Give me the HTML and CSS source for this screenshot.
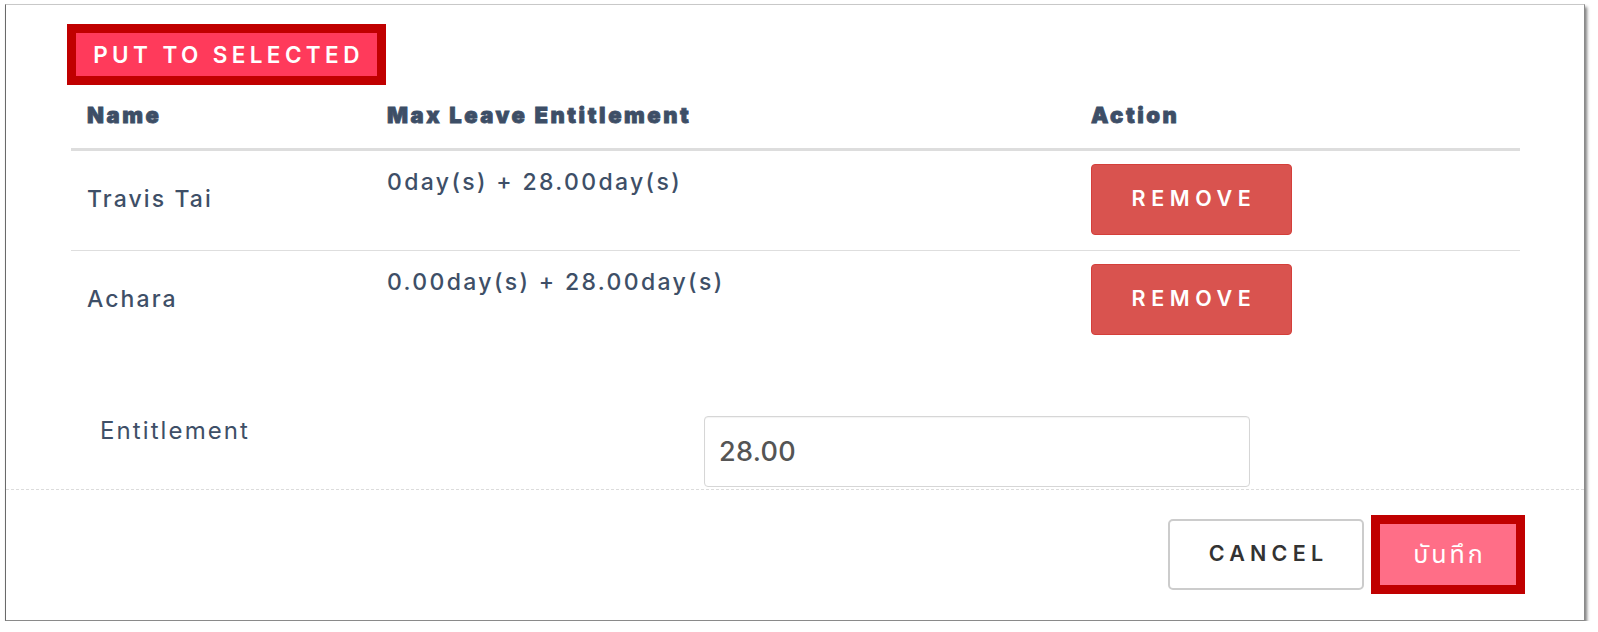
FILE: index.html
```html
<!DOCTYPE html>
<html>
<head>
<meta charset="utf-8">
<link rel="stylesheet" href="styles.css">
</head>
<body>
<div class="frame">
  <div class="modal-body">
    <button class="btn-put">PUT TO SELECTED</button>
    <div class="tbl">
      <div class="tr th">
        <div class="cell">Name</div>
        <div class="cell">Max Leave Entitlement</div>
        <div class="cell">Action</div>
      </div>
      <div class="tr row sep">
        <div class="cell name">Travis Tai</div>
        <div class="cell amt">0day(s) + 28.00day(s)</div>
        <div class="cell act"><button class="btn-remove">REMOVE</button></div>
      </div>
      <div class="tr row">
        <div class="cell name">Achara</div>
        <div class="cell amt">0.00day(s) + 28.00day(s)</div>
        <div class="cell act"><button class="btn-remove">REMOVE</button></div>
      </div>
    </div>
    <div class="form-row">
      <label class="form-label">Entitlement</label>
      <input class="form-input" type="text" value="28.00">
    </div>
  </div>
  <div class="modal-footer">
    <button class="btn-cancel">CANCEL</button>
    <button class="btn-save">บันทึก</button>
  </div>
</div>
</body>
</html>
```
FILE: styles.css
```css
* { box-sizing: border-box; }
html, body { margin: 0; padding: 0; background: #fff; }
body {
  font-family: "Inter", "Liberation Sans", sans-serif;
  color: #3e4f67;
  padding: 4px 0 0 5px;
}
.frame {
  width: 1580px;
  background: #fff;
  border-left: 1px solid #6a6a6a;
  border-top: 1px solid #c8c8c8;
  border-right: 1px solid #8a8a8a;
  border-bottom: 1px solid #8a8a8a;
  box-shadow: 2px 3px 3px rgba(0,0,0,0.5);
}
.modal-body {
  padding: 19px 0 2px 61px;
}
button { font-family: inherit; cursor: pointer; }
.btn-put {
  display: block;
  width: 319px;
  height: 61px;
  border: 9px solid #c00000;
  background: #ff3a5b;
  color: #fff;
  font-size: 22.5px;
  font-weight: 600;
  letter-spacing: 4.4px;
  padding: 0 0 0 4px;
  border-radius: 0;
}
.tbl {
  margin-left: 4px;
  width: 1449px;
}
.tr {
  display: grid;
  grid-template-columns: 300px 704px 445px;
}
.cell { padding: 0 16px; }
.th {
  border-bottom: 3px solid #dddddd;
}
.th .cell {
  padding-top: 17px;
  padding-bottom: 20px;
  font-size: 22px;
  line-height: 26px;
  font-weight: 900;
  letter-spacing: 2.55px;
  -webkit-text-stroke: 0.8px #3d4e66;
  color: #3d4e66;
}
.row {
  height: 99px;
  font-size: 23px;
  line-height: 26px;
  font-weight: 500;
  letter-spacing: 2.1px;
}
.row.sep { height: 100px; border-bottom: 1px solid #dedede; }
.name { align-self: center; padding-bottom: 4px; }
.amt { align-self: start; padding-top: 18px; letter-spacing: 2.35px; }
.act { padding-top: 13px; }
.btn-remove {
  width: 201px;
  height: 71px;
  background: #d9534f;
  border: 1px solid #d43f3a;
  border-radius: 4px;
  color: #fff;
  font-size: 21.5px;
  font-weight: 600;
  letter-spacing: 5.6px;
  padding: 0 0 3px 5px;
}
.form-row {
  margin-top: 66px;
  display: grid;
  grid-template-columns: 637px 546px;
  align-items: start;
}
.form-label {
  padding-left: 33px;
  padding-top: 1px;
  font-size: 24px;
  line-height: 28px;
  font-weight: 400;
  letter-spacing: 2.1px;
  color: #3e4f67;
}
.form-input {
  width: 546px;
  height: 71px;
  border: 1px solid #d6d6d6;
  border-radius: 4px;
  padding: 0 14px;
  font-family: "Inter", "Liberation Sans", sans-serif;
  font-size: 27px;
  font-weight: 500;
  letter-spacing: 0.3px;
  color: #555555;
  box-shadow: inset 0 1px 1px rgba(0,0,0,0.05);
  outline: none;
}
.modal-footer {
  border-top: 1px dashed #dcdcdc;
  padding: 25px 59px 26px 0;
  display: flex;
  justify-content: flex-end;
  align-items: center;
  gap: 7px;
}
.btn-cancel {
  width: 196px;
  height: 71px;
  background: #fff;
  border: 2px solid #cccccc;
  border-radius: 5px;
  color: #333;
  font-size: 21.5px;
  font-weight: 600;
  letter-spacing: 5.2px;
  padding: 0 0 3px 5px;
}
.btn-save {
  width: 154px;
  height: 79px;
  background: #ff6e87;
  border: 9px solid #c00000;
  border-radius: 0;
  color: #fff;
  font-family: "Noto Sans Thai", "Noto Serif Thai", "Loma", "Garuda", "Tlwg Typo", "Norasi", sans-serif;
  font-size: 25px;
  letter-spacing: 3px;
  padding: 0 0 0 3px;
}
```
